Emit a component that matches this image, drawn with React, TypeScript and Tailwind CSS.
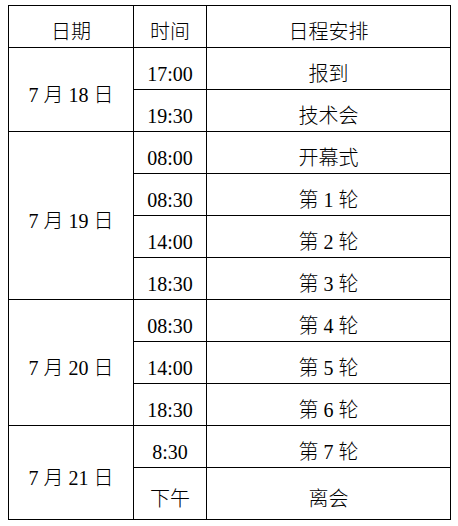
import React from "react";

type Group = { date: string; items: [string, string][] };

const groups: Group[] = [
  { date: "7 月 18 日", items: [["17:00", "报到"], ["19:30", "技术会"]] },
  {
    date: "7 月 19 日",
    items: [
      ["08:00", "开幕式"],
      ["08:30", "第 1 轮"],
      ["14:00", "第 2 轮"],
      ["18:30", "第 3 轮"],
    ],
  },
  {
    date: "7 月 20 日",
    items: [
      ["08:30", "第 4 轮"],
      ["14:00", "第 5 轮"],
      ["18:30", "第 6 轮"],
    ],
  },
  { date: "7 月 21 日", items: [["8:30", "第 7 轮"], ["下午", "离会"]] },
];

const cell = "flex items-center justify-center border-r border-b border-black pt-[10px]";

export default function App() {
  let row = 2;
  return (
    <div className="min-h-screen bg-white pl-2 pt-[5px] text-[20px] font-light leading-none text-black font-['Liberation_Serif','Noto_Sans_CJK_SC',serif]">
      <div className="grid w-[443px] grid-cols-[125px_73px_244px] grid-rows-[repeat(11,42px)_52px] border-l border-t border-black">
        <div className={cell}>日期</div>
        <div className={cell}>时间</div>
        <div className={cell}>日程安排</div>
        {groups.map((g) => {
          const start = row;
          row += g.items.length;
          return (
            <React.Fragment key={g.date}>
              <div
                className={cell + " col-start-1 pt-[4px]"}
                style={{ gridRow: `${start} / span ${g.items.length}` }}
              >
                {g.date}
              </div>
              {g.items.map(([t, s], i) => (
                <React.Fragment key={i}>
                  <div className={cell + " col-start-2"} style={{ gridRow: start + i }}>
                    {t}
                  </div>
                  <div className={cell + " col-start-3"} style={{ gridRow: start + i }}>
                    {s}
                  </div>
                </React.Fragment>
              ))}
            </React.Fragment>
          );
        })}
      </div>
    </div>
  );
}
